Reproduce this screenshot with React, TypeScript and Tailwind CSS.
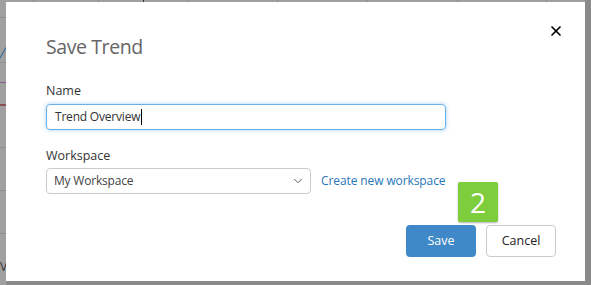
import { X, ChevronDown } from "lucide-react";

const font = { fontFamily: '"Open Sans", "Noto Sans", sans-serif' };

export default function App() {
  return (
    <div
      className="relative h-[285px] w-[591px] overflow-hidden bg-[#a0a0a0]"
      style={font}
    >
      {/* chart backdrop behind the dialog */}
      <div className="absolute inset-0">
        {[17, 62, 147, 190, 233].map((y) => (
          <div
            key={y}
            className="absolute left-0 h-px w-full bg-[#8e8e8e]"
            style={{ top: y }}
          />
        ))}
        {[33, 98, 188, 277, 367, 457, 546].map((x) => (
          <div
            key={x}
            className="absolute top-0 h-full w-px bg-[#8e8e8e]"
            style={{ left: x }}
          />
        ))}
        <div className="absolute left-[143px] top-0 h-full w-px bg-[#333]" />
        <div className="absolute left-0 top-[82px] h-px w-full bg-[#8a5a8e]" />
        <div className="absolute left-0 top-[104px] h-[2px] w-full bg-[#8a4f4f]" />
        <svg className="absolute left-0 top-[40px]" width="8" height="20">
          <path d="M0 18 L7 6" stroke="#3d6d9a" strokeWidth="1.2" fill="none" />
        </svg>
        <span className="absolute left-0 top-[258px] text-[12px] text-[#333]">
          V
        </span>
        <div className="absolute right-0 top-0 h-full w-[6px] bg-[#8a8a8a]" />
        <div className="absolute bottom-0 left-[6px] h-[4px] w-full bg-[#8a8a8a]" />
      </div>

      {/* dialog */}
      <div className="absolute left-[6px] top-[2px] flex h-[279px] w-[579px] flex-col bg-white">
        <div className="flex items-start justify-between pl-[40px] pr-[21px]">
          <h2 className="mt-[31px] text-[19.5px] font-normal leading-[28px] tracking-[-0.4px] text-[#666]">
            Save Trend
          </h2>
          <button className="mt-[21px] text-black">
            <X size={16} strokeWidth={2.6} />
          </button>
        </div>

        <div className="mt-[21px] flex flex-col pl-[40px]">
          <label className="text-[12.5px] leading-[18px] text-[#333]">Name</label>
          <div className="mt-[4px] flex h-[26px] w-[400px] items-center rounded-[4px] border border-[#66afe9] px-[8px] shadow-[0_0_4px_rgba(102,175,233,0.6)]">
            <span className="text-[12px] tracking-[-0.2px] text-[#333]">
              Trend Overview
            </span>
            <span className="ml-px h-[16px] w-px bg-black" />
          </div>

          <label className="mt-[17px] text-[12.5px] leading-[18px] text-[#333]">
            Workspace
          </label>
          <div className="mt-[3px] flex items-center gap-[10px]">
            <div className="flex h-[26px] w-[265px] items-center justify-between rounded-[4px] border border-[#ccc] pl-[7px] pr-[5px]">
              <span className="text-[12px] tracking-[-0.2px] text-[#444]">
                My Workspace
              </span>
              <ChevronDown size={14} strokeWidth={1.6} className="text-[#555]" />
            </div>
            <a className="text-[12px] tracking-[-0.1px] text-[#2a76b8]">
              Create new workspace
            </a>
          </div>
        </div>

        <div className="mr-[29px] mt-[-12px] flex justify-end">
          <div className="mr-[58px] flex h-[40px] w-[40px] items-center justify-center rounded-[2px] bg-[#7dcd3d] text-[28px] leading-none text-white shadow-[0_1px_2px_rgba(0,0,0,0.3)]">
            2
          </div>
        </div>

        <div className="mr-[29px] mt-[3px] flex justify-end gap-[10px]">
          <button className="h-[32px] w-[70px] rounded-[4px] bg-[#3f89c9] text-[12.5px] text-white">
            Save
          </button>
          <button className="h-[32px] w-[70px] rounded-[4px] border border-[#ccc] bg-white text-[12.5px] text-[#222]">
            Cancel
          </button>
        </div>
      </div>
    </div>
  );
}
